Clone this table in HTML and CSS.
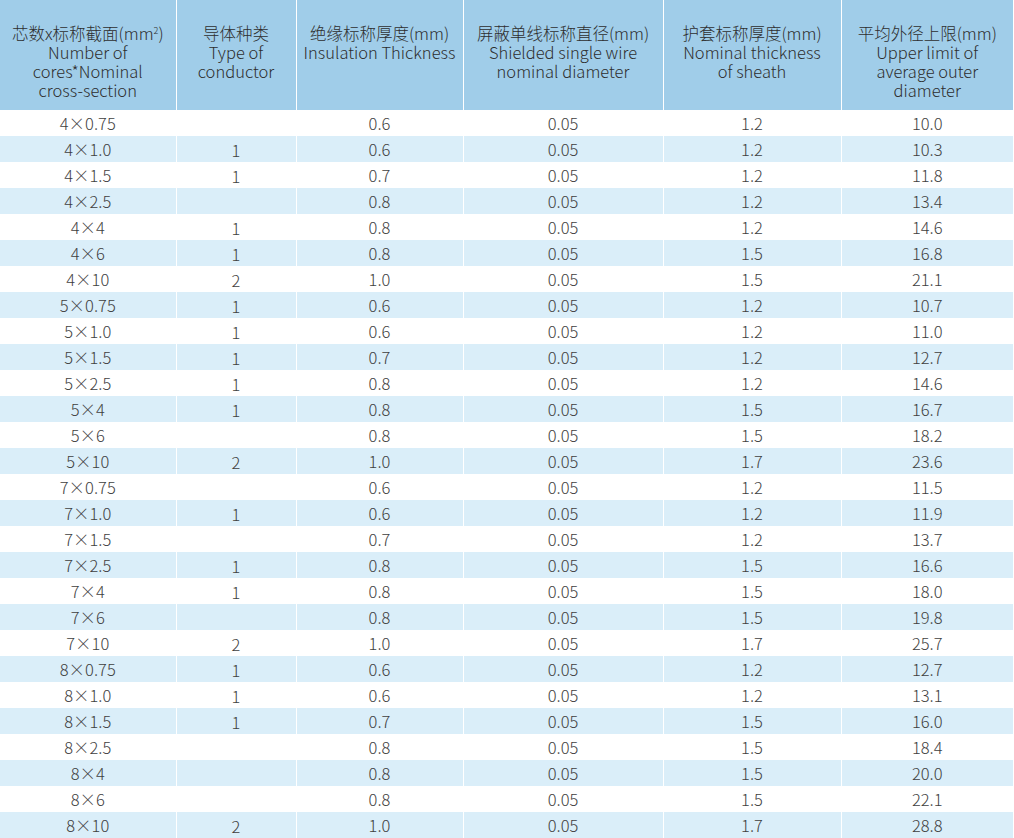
FILE: index.html
```html
<!DOCTYPE html>
<html lang="zh">
<head>
<meta charset="utf-8">
<link rel="stylesheet" href="styles.css">
</head>
<body>
<table class="spec">
<colgroup>
<col class="c1"><col class="c2"><col class="c3"><col class="c4"><col class="c5"><col class="c6">
</colgroup>
<thead>
<tr>
<th>芯数x标称截面(mm<sup>2</sup>)<br>Number of<br>cores*Nominal<br>cross-section</th>
<th>导体种类<br>Type of<br>conductor</th>
<th>绝缘标称厚度(mm)<br>Insulation Thickness</th>
<th>屏蔽单线标称直径(mm)<br>Shielded single wire<br>nominal diameter</th>
<th>护套标称厚度(mm)<br>Nominal thickness<br>of sheath</th>
<th>平均外径上限(mm)<br>Upper limit of<br>average outer<br>diameter</th>
</tr>
</thead>
<tbody>
<tr><td>4×0.75</td><td class="t"></td><td>0.6</td><td>0.05</td><td>1.2</td><td>10.0</td></tr>
<tr><td>4×1.0</td><td class="t">1</td><td>0.6</td><td>0.05</td><td>1.2</td><td>10.3</td></tr>
<tr><td>4×1.5</td><td class="t">1</td><td>0.7</td><td>0.05</td><td>1.2</td><td>11.8</td></tr>
<tr><td>4×2.5</td><td class="t"></td><td>0.8</td><td>0.05</td><td>1.2</td><td>13.4</td></tr>
<tr><td>4×4</td><td class="t">1</td><td>0.8</td><td>0.05</td><td>1.2</td><td>14.6</td></tr>
<tr><td>4×6</td><td class="t">1</td><td>0.8</td><td>0.05</td><td>1.5</td><td>16.8</td></tr>
<tr><td>4×10</td><td class="t">2</td><td>1.0</td><td>0.05</td><td>1.5</td><td>21.1</td></tr>
<tr><td>5×0.75</td><td class="t">1</td><td>0.6</td><td>0.05</td><td>1.2</td><td>10.7</td></tr>
<tr><td>5×1.0</td><td class="t">1</td><td>0.6</td><td>0.05</td><td>1.2</td><td>11.0</td></tr>
<tr><td>5×1.5</td><td class="t">1</td><td>0.7</td><td>0.05</td><td>1.2</td><td>12.7</td></tr>
<tr><td>5×2.5</td><td class="t">1</td><td>0.8</td><td>0.05</td><td>1.2</td><td>14.6</td></tr>
<tr><td>5×4</td><td class="t">1</td><td>0.8</td><td>0.05</td><td>1.5</td><td>16.7</td></tr>
<tr><td>5×6</td><td class="t"></td><td>0.8</td><td>0.05</td><td>1.5</td><td>18.2</td></tr>
<tr><td>5×10</td><td class="t">2</td><td>1.0</td><td>0.05</td><td>1.7</td><td>23.6</td></tr>
<tr><td>7×0.75</td><td class="t"></td><td>0.6</td><td>0.05</td><td>1.2</td><td>11.5</td></tr>
<tr><td>7×1.0</td><td class="t">1</td><td>0.6</td><td>0.05</td><td>1.2</td><td>11.9</td></tr>
<tr><td>7×1.5</td><td class="t"></td><td>0.7</td><td>0.05</td><td>1.2</td><td>13.7</td></tr>
<tr><td>7×2.5</td><td class="t">1</td><td>0.8</td><td>0.05</td><td>1.5</td><td>16.6</td></tr>
<tr><td>7×4</td><td class="t">1</td><td>0.8</td><td>0.05</td><td>1.5</td><td>18.0</td></tr>
<tr><td>7×6</td><td class="t"></td><td>0.8</td><td>0.05</td><td>1.5</td><td>19.8</td></tr>
<tr><td>7×10</td><td class="t">2</td><td>1.0</td><td>0.05</td><td>1.7</td><td>25.7</td></tr>
<tr><td>8×0.75</td><td class="t">1</td><td>0.6</td><td>0.05</td><td>1.2</td><td>12.7</td></tr>
<tr><td>8×1.0</td><td class="t">1</td><td>0.6</td><td>0.05</td><td>1.2</td><td>13.1</td></tr>
<tr><td>8×1.5</td><td class="t">1</td><td>0.7</td><td>0.05</td><td>1.5</td><td>16.0</td></tr>
<tr><td>8×2.5</td><td class="t"></td><td>0.8</td><td>0.05</td><td>1.5</td><td>18.4</td></tr>
<tr><td>8×4</td><td class="t"></td><td>0.8</td><td>0.05</td><td>1.5</td><td>20.0</td></tr>
<tr><td>8×6</td><td class="t"></td><td>0.8</td><td>0.05</td><td>1.5</td><td>22.1</td></tr>
<tr><td>8×10</td><td class="t">2</td><td>1.0</td><td>0.05</td><td>1.7</td><td>28.8</td></tr>
</tbody>
</table>
</body>
</html>
```
FILE: styles.css
```css
html, body {
  margin: 0;
  padding: 0;
  background: #fff;
}
body {
  font-family: "Noto Sans CJK SC", "Noto Sans", sans-serif;
  font-weight: 300;
  color: #3c3c3c;
}
.spec {
  width: 1013px;
  border-collapse: collapse;
  table-layout: fixed;
}
.c1 { width: 176px; }
.c2 { width: 120px; }
.c3 { width: 167px; }
.c4 { width: 200px; }
.c5 { width: 178px; }
.c6 { width: 172px; }
.spec th {
  background: #a0cde9;
  height: 110px;
  box-sizing: border-box;
  padding: 24px 2px 0;
  vertical-align: top;
  font-weight: 300;
  font-size: 16.5px;
  line-height: 19px;
  color: #2e2e2e;
  text-align: center;
}
.spec th sup {
  font-size: 9px;
  line-height: 0;
  vertical-align: 6px;
}
.spec th + th,
.spec td + td {
  border-left: 1px solid #fff;
}
.spec tr {
  height: 26px;
}
.spec td {
  height: 26px;
  padding: 0;
  box-sizing: border-box;
  font-size: 16.5px;
  line-height: 26px;
  text-align: center;
  color: #3f3f3f;
  vertical-align: middle;
  overflow: hidden;
}
.spec tbody tr:nth-child(even) td {
  background: #daeef9;
}
.spec td.t {
  padding-top: 3px;
  line-height: 23px;
}
```
